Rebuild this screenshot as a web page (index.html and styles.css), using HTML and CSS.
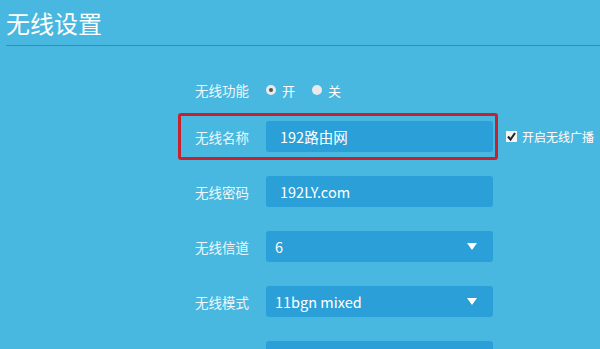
FILE: index.html
```html
<!doctype html>
<html>
<head>
  <meta charset="utf-8" />
  <title>无线设置</title>
  <link rel="stylesheet" href="styles.css">
</head>

<body>
  <h1 class="title">无线设置</h1>
  <form class="settings">
    <div class="row row-radio">
      <span class="label">无线功能</span>
      <span class="radio checked"></span><span class="radio-text">开</span>
      <span class="radio"></span><span class="radio-text">关</span>
    </div>
    <div class="row">
      <span class="label">无线名称</span>
      <div class="field text-field">192路由网</div>
      <span class="check">
        <svg width="11" height="11" viewBox="0 0 11 11"><path d="M2 5.5 L4.5 8.5 L9 2" fill="none" stroke="#222" stroke-width="2"/></svg>
      </span>
      <span class="check-text">开启无线广播</span>
      <div class="mark"></div>
    </div>
    <div class="row">
      <span class="label">无线密码</span>
      <div class="field text-field">192LY.com</div>
    </div>
    <div class="row">
      <span class="label">无线信道</span>
      <div class="field select">6</div>
    </div>
    <div class="row">
      <span class="label">无线模式</span>
      <div class="field select">11bgn mixed</div>
    </div>
    <div class="row">
      <span class="label"></span>
      <div class="field select"></div>
    </div>
  </form>
</body>
</html>
```

FILE: styles.css
```css
body {
  margin: 0;
  background: #48b8e0;
  font-family: "Noto Sans CJK SC", "Noto Sans", sans-serif;
  color: #fff;
  overflow: hidden;
}
.title {
  margin: 0 0 0 6px;
  padding: 8px 0 8px 0;
  font-size: 24px;
  font-weight: normal;
  line-height: 29px;
  border-bottom: 1px solid #2890cc;
}
.settings {
  padding: 34px 0 0 195px;
  display: flex;
  flex-direction: column;
  gap: 24px;
}
.row {
  position: relative;
  display: flex;
  align-items: center;
  height: 31px;
  white-space: nowrap;
}
.row-radio {
  height: 20px;
  margin-bottom: -3px;
}
.label {
  width: 71px;
  font-size: 13.5px;
  color: #eef7fc;
}
.radio {
  width: 10px;
  height: 10px;
  border-radius: 50%;
  background: #e9e9ec;
  margin-right: 6px;
  position: relative;
}
.radio.checked::after {
  content: '';
  position: absolute;
  left: 3px;
  top: 3px;
  width: 4px;
  height: 4px;
  border-radius: 50%;
  background: #555;
}
.radio-text {
  font-size: 13px;
  margin-right: 17px;
}
.field {
  width: 227px;
  height: 31px;
  box-sizing: border-box;
  background: #2b9fd7;
  border-radius: 3px;
  font-size: 14.5px;
  line-height: 31px;
  position: relative;
}
.text-field {
  padding-left: 14px;
}
.select {
  padding-left: 9px;
}
.select::after {
  content: '';
  position: absolute;
  right: 16px;
  top: 12px;
  border-left: 5px solid transparent;
  border-right: 5px solid transparent;
  border-top: 7px solid #fff;
}
.check {
  width: 11px;
  height: 11px;
  background: #f4f4f4;
  margin-left: 13px;
  display: flex;
}
.check-text {
  margin-left: 5px;
  font-size: 12px;
}
.mark {
  position: absolute;
  left: -17px;
  top: -8px;
  width: 320px;
  height: 47px;
  box-sizing: border-box;
  border: 3px solid #c7212e;
  border-radius: 3px;
}
```
